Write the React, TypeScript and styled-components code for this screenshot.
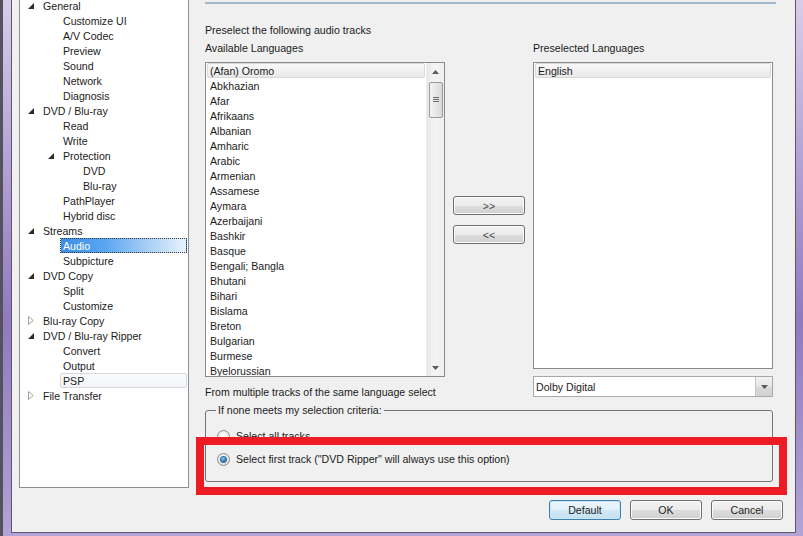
import React from "react";
import styled, { createGlobalStyle, css } from "styled-components";

const GlobalStyle = createGlobalStyle`
  html, body {
    margin: 0;
    padding: 0;
  }
  body {
    width: 803px;
    height: 536px;
    overflow: hidden;
    font-family: "Liberation Sans", Arial, sans-serif;
    font-size: 10.6px;
    color: #1b1b1b;
  }
`;

const Window = styled.div`
  position: relative;
  width: 803px;
  height: 536px;
  box-sizing: border-box;
  padding: 0 7px 3px 11px;
  background: linear-gradient(180deg, #d7cdea 0%, #ad9bd2 35%, #8f7bbd 60%, #b3a3d7 100%);
  box-shadow: inset 3px 0 0 #55525d;
  overflow: hidden;
`;

const Dialog = styled.div`
  height: 100%;
  box-sizing: border-box;
  background: #f0f0f0;
  border: 1px solid #5c5769;
  border-top: none;
  display: flex;
  flex-direction: column;
`;

const Main = styled.div`
  display: flex;
  height: 488px;
  padding-left: 7px;
`;

/* ---------- tree ---------- */

const Tree = styled.div`
  width: 170px;
  height: 488px;
  box-sizing: border-box;
  background: #fff;
  border: 1px solid #8b8e94;
  border-top: none;
`;

const TreeList = styled.ul`
  list-style: none;
  margin: -2px 0 0 0;
  padding: 0;
`;

const TreeRow = styled.li<{ $level: number }>`
  display: flex;
  align-items: center;
  height: 15px;
  padding-left: ${(p) => 3 + p.$level * 20}px;
`;

const Expander = styled.span`
  width: 16px;
  height: 15px;
  margin-right: 4px;
  display: flex;
  align-items: center;
  justify-content: center;
`;

const TreeLabel = styled.span<{ $state?: "selected" | "hover" }>`
  flex: 1;
  height: 15px;
  line-height: 14px;
  box-sizing: border-box;
  margin-left: -3px;
  margin-right: 1px;
  padding-left: 3px;
  white-space: nowrap;
  border: 1px solid transparent;
  border-left-width: 0;
  ${(p) =>
    p.$state === "selected" &&
    css`
      color: #fff;
      border: 1px dotted #3a3a3a;
      padding-left: 2px;
      background: linear-gradient(90deg, #3b8fe6 0%, #5aa6f2 35%, #a9cff5 70%, #e9f2fc 100%);
    `}
  ${(p) =>
    p.$state === "hover" &&
    css`
      border: 1px solid #d4d8de;
      border-radius: 2px;
      padding-left: 2px;
      background: linear-gradient(180deg, #fbfcfd, #f3f5f8);
    `}
`;

/* ---------- content ---------- */

const Content = styled.div`
  margin-left: 16px;
  width: 571px;
  display: flex;
  flex-direction: column;
`;

const Separator = styled.div`
  margin-top: 2px;
  height: 2px;
  background: #a6b6ca;
`;

const Caption = styled.div<{ $top?: number }>`
  margin-top: ${(p) => p.$top ?? 0}px;
  height: 15px;
  line-height: 17px;
  white-space: nowrap;
`;

const Columns = styled.div`
  display: flex;
  margin-top: 3px;
`;

const Column = styled.div<{ $width: number }>`
  width: ${(p) => p.$width}px;
  display: flex;
  flex-direction: column;
`;

const ListBox = styled.div<{ $height: number }>`
  margin-top: 7px;
  height: ${(p) => p.$height}px;
  box-sizing: border-box;
  border: 1px solid #878a90;
  background: #fff;
  display: flex;
  overflow: hidden;
`;

const Items = styled.div`
  flex: 1;
  padding: 0 1px;
`;

const Item = styled.div<{ $selected?: boolean }>`
  height: 15px;
  box-sizing: border-box;
  padding-left: 2px;
  white-space: nowrap;
  border: 1px solid transparent;
  border-radius: 2px;
  line-height: 15px;
  ${(p) =>
    p.$selected &&
    css`
      border-color: #d8d8d8;
      background: linear-gradient(180deg, #f8f8f8, #e9e9e9);
    `}
`;

const ScrollBar = styled.div`
  width: 17px;
  display: flex;
  flex-direction: column;
  align-items: center;
  background: linear-gradient(90deg, #e6e6e6, #f4f4f4 40%, #efefef);
  border-left: 1px solid #ececec;
`;

const ArrowCell = styled.div`
  height: 17px;
  width: 100%;
  display: flex;
  align-items: center;
  justify-content: center;
`;

const Thumb = styled.div`
  margin-top: 2px;
  width: 14px;
  height: 36px;
  box-sizing: border-box;
  border: 1px solid #9a9a9a;
  border-radius: 2px;
  background: linear-gradient(90deg, #f4f4f4, #e6e6e6 50%, #d8d8d8);
  display: flex;
  align-items: center;
  justify-content: center;
`;

const Spacer = styled.div`
  flex: 1;
`;

const MoveButtons = styled.div`
  display: flex;
  flex-direction: column;
  align-items: center;
  gap: 10px;
  padding-top: 156px;
`;

const Button = styled.button<{ $primary?: boolean; $height?: number }>`
  width: 72px;
  height: ${(p) => p.$height ?? 20}px;
  padding: 0;
  box-sizing: border-box;
  font-family: inherit;
  font-size: 10.6px;
  color: #1e1e1e;
  border: 1px solid #707070;
  border-radius: 3px;
  box-shadow: inset 0 0 0 1px #fbfbfb;
  background: linear-gradient(180deg, #f2f2f2 0%, #ebebeb 50%, #dddddd 51%, #cfcfcf 100%);
  ${(p) =>
    p.$primary &&
    css`
      border-color: #3c7fb1;
      box-shadow: inset 0 0 0 1px #c8e7f8;
      background: linear-gradient(180deg, #eaf5fb 0%, #e1f0f9 50%, #d2e8f5 51%, #c3e0f1 100%);
    `}
`;

const MoveLabel = styled.span`
  color: #4a4a4a;
  font-size: 10.6px;
`;

const Combo = styled.div`
  margin-top: 7px;
  height: 21px;
  box-sizing: border-box;
  border: 1px solid #a7a9ae;
  background: #fff;
  display: flex;
  align-items: stretch;
`;

const ComboText = styled.div`
  flex: 1;
  padding-left: 2px;
  line-height: 20px;
`;

const ComboButton = styled.div`
  width: 16px;
  border-left: 1px solid #c5c5c5;
  background: linear-gradient(180deg, #f2f2f2, #e6e6e6 50%, #d9d9d9 51%, #d2d2d2);
  display: flex;
  align-items: center;
  justify-content: center;
`;

const Group = styled.fieldset`
  margin: 4px 0 0 0;
  width: 568px;
  height: 79px;
  box-sizing: border-box;
  padding: 0;
  border: 1px solid #747474;
  border-radius: 3px;
`;

const Legend = styled.legend`
  margin-left: 10px;
  padding: 0 2px;
  line-height: 15px;
`;

const RadioList = styled.div`
  display: flex;
  flex-direction: column;
  gap: 7px;
  padding: 10px 0 0 11px;
`;

const RadioRow = styled.label`
  display: flex;
  align-items: center;
  height: 16px;
  gap: 6px;
  white-space: nowrap;
`;

const RadioCircle = styled.span<{ $checked?: boolean }>`
  width: 13px;
  height: 13px;
  box-sizing: border-box;
  border-radius: 50%;
  border: 1px solid #8d8d8d;
  background: radial-gradient(circle at 50% 40%, #ffffff, #e2e2e2 70%, #cfcfcf);
  display: flex;
  align-items: center;
  justify-content: center;
  &::after {
    content: "";
    display: ${(p) => (p.$checked ? "block" : "none")};
    width: 5px;
    height: 5px;
    border-radius: 50%;
    background: radial-gradient(circle at 40% 35%, #8fd0f6, #1a5f9c 70%, #0d3d6c);
    box-shadow: 0 0 0 1px #2b6fa8;
  }
`;

const ButtonRow = styled.div`
  display: flex;
  justify-content: flex-end;
  gap: 9px;
  margin-top: 12px;
  padding-right: 12px;
`;

const Annotation = styled.div`
  position: absolute;
  left: 196px;
  top: 437px;
  width: 591px;
  height: 58px;
  box-sizing: border-box;
  border: 8px solid #ed1c24;
  pointer-events: none;
`;

/* ---------- data ---------- */

type TreeNode = {
  label: string;
  level: number;
  expander?: "open" | "closed";
  state?: "selected" | "hover";
};

const treeNodes: TreeNode[] = [
  { label: "General", level: 0, expander: "open" },
  { label: "Customize UI", level: 1 },
  { label: "A/V Codec", level: 1 },
  { label: "Preview", level: 1 },
  { label: "Sound", level: 1 },
  { label: "Network", level: 1 },
  { label: "Diagnosis", level: 1 },
  { label: "DVD / Blu-ray", level: 0, expander: "open" },
  { label: "Read", level: 1 },
  { label: "Write", level: 1 },
  { label: "Protection", level: 1, expander: "open" },
  { label: "DVD", level: 2 },
  { label: "Blu-ray", level: 2 },
  { label: "PathPlayer", level: 1 },
  { label: "Hybrid disc", level: 1 },
  { label: "Streams", level: 0, expander: "open" },
  { label: "Audio", level: 1, state: "selected" },
  { label: "Subpicture", level: 1 },
  { label: "DVD Copy", level: 0, expander: "open" },
  { label: "Split", level: 1 },
  { label: "Customize", level: 1 },
  { label: "Blu-ray Copy", level: 0, expander: "closed" },
  { label: "DVD / Blu-ray Ripper", level: 0, expander: "open" },
  { label: "Convert", level: 1 },
  { label: "Output", level: 1 },
  { label: "PSP", level: 1, state: "hover" },
  { label: "File Transfer", level: 0, expander: "closed" },
];

const languages = [
  "(Afan) Oromo",
  "Abkhazian",
  "Afar",
  "Afrikaans",
  "Albanian",
  "Amharic",
  "Arabic",
  "Armenian",
  "Assamese",
  "Aymara",
  "Azerbaijani",
  "Bashkir",
  "Basque",
  "Bengali; Bangla",
  "Bhutani",
  "Bihari",
  "Bislama",
  "Breton",
  "Bulgarian",
  "Burmese",
  "Byelorussian",
];

function ExpanderIcon({ kind }: { kind: "open" | "closed" }) {
  if (kind === "open") {
    return (
      <svg width="6" height="6" viewBox="0 0 6 6">
        <path d="M6 0 L6 6 L0 6 Z" fill="#2b2b2b" />
      </svg>
    );
  }
  return (
    <svg width="6" height="9" viewBox="0 0 6 9">
      <path d="M0.5 0.5 L5.2 4.5 L0.5 8.5 Z" fill="#fff" stroke="#a0a0a0" strokeWidth="1" />
    </svg>
  );
}

function SmallArrow({ up }: { up?: boolean }) {
  return (
    <svg width="7" height="4" viewBox="0 0 7 4">
      <path d={up ? "M0 4 L3.5 0 L7 4 Z" : "M0 0 L7 0 L3.5 4 Z"} fill="#5a5a5a" />
    </svg>
  );
}

function Grip() {
  return (
    <svg width="6" height="6" viewBox="0 0 6 6">
      <path d="M0 0.5 H6 M0 2.5 H6 M0 4.5 H6" stroke="#6a6a6a" strokeWidth="1" />
    </svg>
  );
}

export default function App() {
  return (
    <>
      <GlobalStyle />
      <Window>
        <Dialog>
          <Main>
            <Tree>
              <TreeList>
                {treeNodes.map((node) => (
                  <TreeRow key={node.label + node.level} $level={node.level}>
                    <Expander>{node.expander && <ExpanderIcon kind={node.expander} />}</Expander>
                    <TreeLabel $state={node.state}>{node.label}</TreeLabel>
                  </TreeRow>
                ))}
              </TreeList>
            </Tree>

            <Content>
              <Separator />
              <Caption $top={18}>Preselect the following audio tracks</Caption>
              <Columns>
                <Column $width={240}>
                  <Caption>Available Languages</Caption>
                  <ListBox $height={315}>
                    <Items>
                      {languages.map((lang, i) => (
                        <Item key={lang} $selected={i === 0}>
                          {lang}
                        </Item>
                      ))}
                    </Items>
                    <ScrollBar>
                      <ArrowCell>
                        <SmallArrow up />
                      </ArrowCell>
                      <Thumb>
                        <Grip />
                      </Thumb>
                      <Spacer />
                      <ArrowCell>
                        <SmallArrow />
                      </ArrowCell>
                    </ScrollBar>
                  </ListBox>
                  <Caption $top={7}>From multiple tracks of the same language select</Caption>
                </Column>

                <Column $width={88}>
                  <MoveButtons>
                    <Button $height={19}>
                      <MoveLabel>&gt;&gt;</MoveLabel>
                    </Button>
                    <Button $height={19}>
                      <MoveLabel>&lt;&lt;</MoveLabel>
                    </Button>
                  </MoveButtons>
                </Column>

                <Column $width={240}>
                  <Caption>Preselected Languages</Caption>
                  <ListBox $height={307}>
                    <Items>
                      <Item $selected>English</Item>
                    </Items>
                  </ListBox>
                  <Combo>
                    <ComboText>Dolby Digital</ComboText>
                    <ComboButton>
                      <SmallArrow />
                    </ComboButton>
                  </Combo>
                </Column>
              </Columns>

              <Group>
                <Legend>If none meets my selection criteria:</Legend>
                <RadioList>
                  <RadioRow>
                    <RadioCircle />
                    Select all tracks
                  </RadioRow>
                  <RadioRow>
                    <RadioCircle $checked />
                    Select first track ("DVD Ripper" will always use this option)
                  </RadioRow>
                </RadioList>
              </Group>
            </Content>
          </Main>

          <ButtonRow>
            <Button $primary>Default</Button>
            <Button>OK</Button>
            <Button>Cancel</Button>
          </ButtonRow>
        </Dialog>
        <Annotation />
      </Window>
    </>
  );
}
